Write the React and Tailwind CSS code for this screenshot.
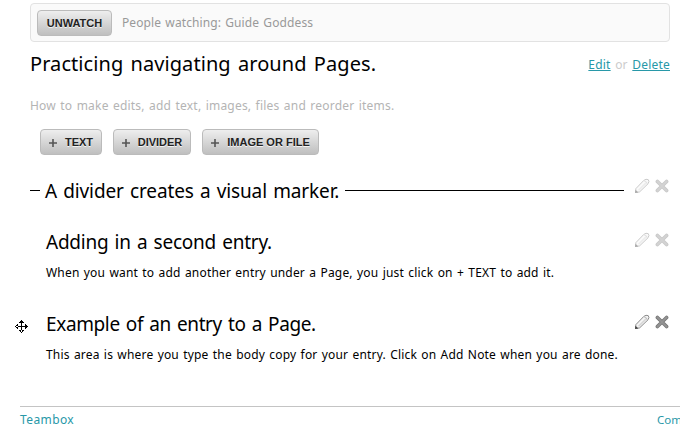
const SANS = "font-['Noto_Sans','Open_Sans',sans-serif]";

function Pencil({ dim }) {
  return (
    <svg width="16" height="16" viewBox="0 0 16 16" className={dim ? "opacity-45" : ""}>
      <path d="M1.5 14.5 L1.9 10.6 L9.8 2.4 Q12 0.6 14.2 1.6 Q15.8 3.4 14 5.8 L5.6 13.9 Z" fill="#f4f4f4" stroke="#8c8c8c" strokeWidth="1" />
      <path d="M4.6 12.2 L12.6 4.4" stroke="#d6d6d6" strokeWidth="1.6" />
      <path d="M10 2.8 Q12.6 3 13.4 5.8" fill="none" stroke="#bdbdbd" strokeWidth="1" />
      <path d="M1 15 L1.5 11.8 L4.4 14.4 Z" fill="#444444" />
    </svg>
  );
}

function Cross({ dim }) {
  return (
    <svg width="14" height="14" viewBox="0 0 14 14" className={dim ? "opacity-40" : ""}>
      <path d="M2.4 2.4 L11.6 11.6 M11.6 2.4 L2.4 11.6" stroke="#777777" strokeWidth="3.6" strokeLinecap="round" />
      <path d="M2.4 2.4 L11.6 11.6 M11.6 2.4 L2.4 11.6" stroke="#949494" strokeWidth="2" strokeLinecap="round" />
    </svg>
  );
}

function Actions({ dim }) {
  return (
    <div className="flex h-4 w-[35px] shrink-0 items-center justify-between">
      <Pencil dim={dim} />
      <Cross dim={dim} />
    </div>
  );
}

function Button({ children, className }) {
  return (
    <button
      className={`flex h-[26px] items-center justify-center whitespace-nowrap rounded-[4px] border border-[#bbbbbb] bg-linear-to-b from-[#eeeeee] to-[#bfbfbf] pt-px font-['Liberation_Sans',Arial,sans-serif] text-[11px] font-bold text-[#222222] [text-shadow:0_1px_0_#f4f4f4] ${className}`}
    >
      {children}
    </button>
  );
}

function Plus() {
  return (
    <svg width="8" height="8" viewBox="0 0 8 8" className="mr-2">
      <path d="M4 0 V8 M0 4 H8" stroke="#555555" strokeWidth="1.6" />
    </svg>
  );
}

function MoveCursor() {
  return (
    <svg width="13" height="13" viewBox="0 0 13 13" shapeRendering="crispEdges">
      <path d="M6 1h1v11h-1z M1 6h11v1h-11z M6 0h1v1h1v1h1v1h-5v-1h1v-1h1z M6 13h1v-1h1v-1h1v-1h-5v1h1v1h1z M0 6v1h1v1h1v1h1v-5h-1v1h-1v1z M13 6v1h-1v1h-1v1h-1v-5h1v1h1v1z" fill="#000000" />
    </svg>
  );
}

function Entry({ title, titleClass, body, bodyClass, dim, handle }) {
  return (
    <section className="flex h-[82px] items-start pr-[11px]">
      <div className="flex h-[30px] w-[46px] shrink-0 items-center pl-[15px] pt-[5px]">{handle && <MoveCursor />}</div>
      <div className="min-w-0 flex-1 whitespace-nowrap text-black">
        <h2 className={`h-[30px] text-[19px] leading-[30px] [word-spacing:1.5px] ${titleClass}`}>{title}</h2>
        <p className={`mt-[7px] text-[12px] leading-[18px] [word-spacing:1px] ${bodyClass}`}>{body}</p>
      </div>
      <div className="pt-[5px]">
        <Actions dim={dim} />
      </div>
    </section>
  );
}

export default function App() {
  return (
    <main className={`flex h-[435px] w-[680px] flex-col overflow-hidden bg-white pt-[3px] ${SANS}`}>
      <div className="ml-[30px] mr-[10px] flex h-[39px] shrink-0 items-center rounded-[4px] border border-[#e2e2e2] bg-[#fafafa] pl-[6px]">
        <Button className="w-[75px]">UNWATCH</Button>
        <span className="ml-[10px] whitespace-nowrap text-[12px] text-[#999999] tracking-[0.1px] [word-spacing:1px]">People watching: Guide Goddess</span>
      </div>
      <header className="ml-[30px] mr-[10px] mt-[7px] flex h-[30px] shrink-0 items-center justify-between whitespace-nowrap">
        <h1 className="text-[20px] leading-[30px] text-black tracking-[0.07px] [word-spacing:2px]">Practicing navigating around Pages.</h1>
        <div className="pt-[2px] text-[12px] text-[#cccccc] tracking-[0.2px] [word-spacing:1.2px]">
          <a className="text-[#2898a8] underline">Edit</a> or <a className="text-[#2898a8] underline">Delete</a>
        </div>
      </header>
      <p className="ml-[30px] mt-[18px] h-[18px] shrink-0 whitespace-nowrap text-[12px] leading-[18px] text-[#b4b4b4] tracking-[0.21px] [word-spacing:1px]">
        How to make edits, add text, images, files and reorder items.
      </p>
      <div className="ml-[40px] mt-[14px] flex h-[26px] shrink-0 gap-[11px]">
        <Button className="w-[62px]"><Plus />TEXT</Button>
        <Button className="w-[78px]"><Plus />DIVIDER</Button>
        <Button className="w-[117px]"><Plus />IMAGE OR FILE</Button>
      </div>
      <section className="ml-[30px] mr-[11px] mt-[20px] flex h-[30px] shrink-0 items-center">
        <div className="h-px w-[10px] bg-black" />
        <h2 className="ml-[5px] w-[300px] whitespace-nowrap pt-[2px] text-[19px] leading-[30px] text-black tracking-[-0.14px] [word-spacing:1.5px]">A divider creates a visual marker.</h2>
        <div className="h-px w-[279px] bg-black" />
        <div className="mb-[9px] ml-[10px]">
          <Actions dim />
        </div>
      </section>
      <div className="mt-[22px] shrink-0">
        <Entry dim title="Adding in a second entry." titleClass="tracking-[-0.24px]" body="When you want to add another entry under a Page, you just click on + TEXT to add it." bodyClass="tracking-[0.18px]" />
        <Entry handle title="Example of an entry to a Page." titleClass="tracking-[-0.37px]" body="This area is where you type the body copy for your entry. Click on Add Note when you are done." bodyClass="tracking-[0.175px]" />
      </div>
      <footer className="ml-[20px] mt-[15px] flex h-[28px] shrink-0 justify-between whitespace-nowrap border-t border-[#c4c4c4] pt-[4px] text-[12px] leading-[18px] text-[#2898a8]">
        <span className="tracking-[0.4px]">Teambox</span>
        <span className="w-[23px] text-[11.5px]">Com</span>
      </footer>
    </main>
  );
}
